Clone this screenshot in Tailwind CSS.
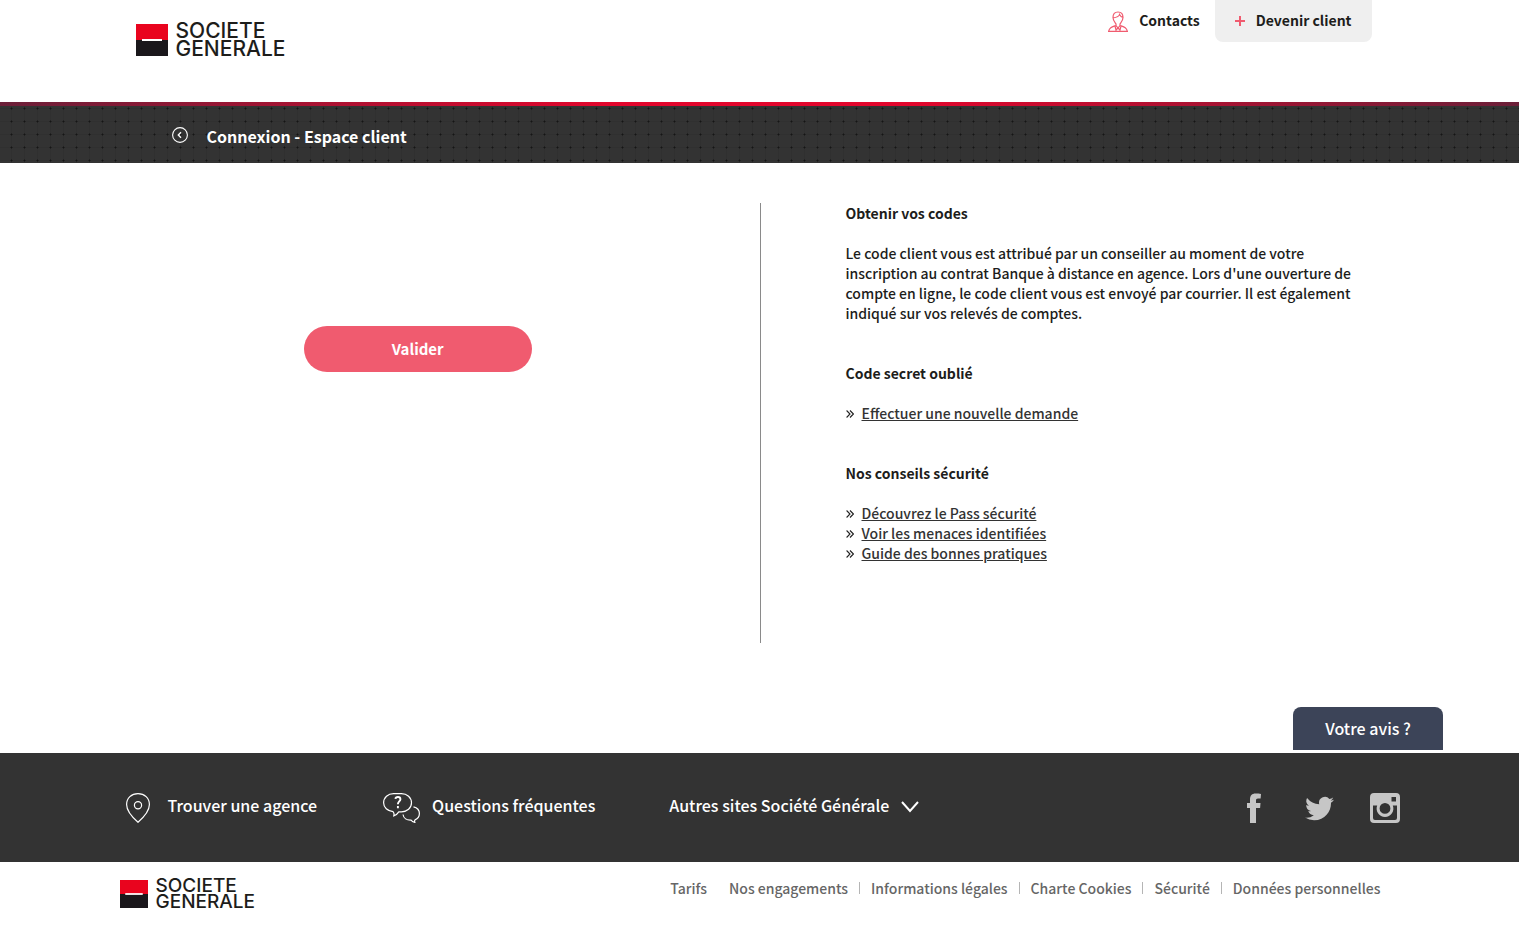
<!DOCTYPE html>
<html lang="fr">
<head>
<meta charset="utf-8">
<meta name="viewport" content="width=device-width, initial-scale=1">
<title>Connexion - Espace client</title>
<script src="https://cdn.jsdelivr.net/npm/@tailwindcss/browser@4"></script>
</head>
<body class="bg-white font-['Noto_Sans_CJK_SC','Noto_Sans',sans-serif] text-sm leading-5 font-medium text-[#1d1d1b]">
<header class="h-[102px]">
  <div class="mx-auto flex max-w-[1248px] items-start justify-between pr-3">
    <a href="#" aria-label="Société Générale" class="mt-[22px] flex items-center gap-2 font-[Inter,sans-serif] text-[21px] leading-[18px] font-medium">
      <svg class="size-8" viewBox="0 0 32 32"><path fill="#e9041e" d="M0 0h32v16H0z"/><path fill="#1a171b" d="M0 16h32v16H0z"/><path fill="#fff" d="M6 15h20v2H6z"/></svg>
      <span>SOCIETE<br>GENERALE</span>
    </a>
    <nav class="flex items-start gap-[15px] font-bold">
      <a href="#" class="flex h-[42px] items-center gap-[11px] pb-0.5">
        <svg class="mt-0.5 h-[21px] w-5" viewBox="0 0 20 21" fill="none" stroke="#f05b6f" stroke-width="1.2"><path d="M10 1C6.500 1 5 3.500 5 6.500c0 3 2 5 3 6.500v1.500L10 17l2-2.500V13c1-1.500 3-3.500 3-6.500C15 3.500 13.500 1 10 1zM5 7c3-.5 6-1 6.500-3.500C12.500 5.500 13.500 6 15 6.500M8 14.500c-4 1.500-6.500 2-7.400 5.900h18.800c-.9-3.900-3.400-4.400-7.400-5.900M7 15l1 4 2-2 2 2 1-4"/></svg>
        Contacts
      </a>
      <a href="#" class="flex h-[42px] items-center gap-[11px] rounded-b-lg bg-[#efefef] px-5 pb-0.5">
        <svg class="mt-0.5 size-2.5" viewBox="0 0 10 10" stroke="#f05b6f" stroke-width="2"><path d="M5 0v10M0 5h10"/></svg>
        Devenir client
      </a>
    </nav>
  </div>
</header>
<div class="h-1 bg-[linear-gradient(to_right,#6b1f38,#e2062c_40%,#e2062c_60%,#6b1f38)]"></div>
<div class="relative h-[57px] bg-[#333]">
  <svg class="absolute inset-0 size-full" aria-hidden="true"><defs><pattern id="grid" width="13" height="13" patternUnits="userSpaceOnUse"><path fill="#303030" d="M11 0h1v13h-1zM0 2h13v1H0z"/><path fill="#232323" d="M10 2h3v1h-3zM11 1h1v3h-1z"/><path fill="#151515" d="M11 2h1v1h-1z"/></pattern></defs><rect width="100%" height="100%" fill="url(#grid)"/></svg>
  <div class="relative mx-auto flex h-full max-w-[1248px] items-center gap-[19px] px-9 pt-0.5">
    <a href="#" aria-label="Retour"><svg class="mb-0.5 size-4" viewBox="0 0 16 16" fill="none" stroke="#fff"><circle cx="8" cy="8" r="7.400" stroke-width="1.100"/><path stroke-width="1.400" d="M9 5.200 6.300 8 9 10.800"/></svg></a>
    <h1 class="text-base leading-5 font-bold text-white">Connexion - Espace client</h1>
  </div>
</div>
<main class="relative mx-auto flex h-[590px] w-[90%] pt-10">
  <form class="flex w-1/2 justify-center pt-[123px]">
    <button type="submit" class="h-[46px] w-[228px] rounded-full bg-[#f05b6f] text-[15px] font-bold text-white">Valider</button>
  </form>
  <div class="h-[440px] w-1/2 border-l border-[#8a8a8a] pr-[83px] pl-[85px]">
    <h2 class="font-bold">Obtenir vos codes</h2>
    <p class="mt-5">Le code client vous est attribué par un conseiller au moment de votre inscription au contrat Banque à distance en agence. Lors d'une ouverture de compte en ligne, le code client vous est envoyé par courrier. Il est également indiqué sur vos relevés de comptes.</p>
    <h2 class="mt-10 font-bold">Code secret oublié</h2>
    <ul class="mt-5 text-[#333]">
      <li class="flex items-center gap-2"><svg class="mt-0.5 size-2" viewBox="0 0 8 8" fill="none" stroke="#222" stroke-width="1.100"><path d="M.6.500 4 4 .6 7.500M4 .5 7.400 4 4 7.500"/></svg><a href="#" class="underline">Effectuer une nouvelle demande</a></li>
    </ul>
    <h2 class="mt-10 font-bold">Nos conseils sécurité</h2>
    <ul class="mt-5 text-[#333]">
      <li class="flex items-center gap-2"><svg class="mt-0.5 size-2" viewBox="0 0 8 8" fill="none" stroke="#222" stroke-width="1.100"><path d="M.6.500 4 4 .6 7.500M4 .5 7.400 4 4 7.500"/></svg><a href="#" class="underline">Découvrez le Pass sécurité</a></li>
      <li class="flex items-center gap-2"><svg class="mt-0.5 size-2" viewBox="0 0 8 8" fill="none" stroke="#222" stroke-width="1.100"><path d="M.6.500 4 4 .6 7.500M4 .5 7.400 4 4 7.500"/></svg><a href="#" class="underline">Voir les menaces identifiées</a></li>
      <li class="flex items-center gap-2"><svg class="mt-0.5 size-2" viewBox="0 0 8 8" fill="none" stroke="#222" stroke-width="1.100"><path d="M.6.500 4 4 .6 7.500M4 .5 7.400 4 4 7.500"/></svg><a href="#" class="underline">Guide des bonnes pratiques</a></li>
    </ul>
  </div>
  <button type="button" class="absolute right-0 bottom-[3px] h-[43px] w-[150px] rounded-t-lg bg-[#3c4458] pb-0.5 text-base font-medium text-white">Votre avis ?</button>
</main>
<footer>
  <div class="bg-[#333] text-base text-white">
    <div class="mx-auto flex h-[109px] max-w-[1280px] items-center">
      <a href="#" class="flex items-center gap-[18px] pl-1.5"><svg class="h-[30px] w-6" viewBox="0 0 24 30" fill="none" stroke="#fff" stroke-width="1.200"><path d="M12 .6C5.500.6.600 5.200.600 11.500.600 18 6 24 12 29.300 18 24 23.400 18 23.400 11.500 23.400 5.200 18.500.6 12 .6z"/><circle cx="12" cy="12.300" r="3.600"/></svg><span class="pb-1.5">Trouver une agence</span></a>
      <a href="#" class="ml-[66px] flex items-center gap-3"><svg class="h-[30px] w-[37px]" viewBox="0 0 37 30" fill="none" stroke="#fff" stroke-width="1.200"><path d="M10 18.700C4.500 18 .6 14.500.6 9.800.6 4.500 5 .6 10.500.6h8c5.500 0 10 4 10 9.200s-4.500 9-10 9h-2.700c-1.300 2-3 3.500-5 4 .5-1.500.3-2.800-.8-4.100zM30.500 13.800c3.500.8 5.900 3.400 5.900 6.800 0 3-1.700 5.200-4.400 6.300-.8.600-.5 1.500-.2 2.400-1.500-.3-3-1-3.800-2.300-4.200.3-7.500-2-8-5.500"/><path stroke-width="1.900" d="M12.400 5.800c.3-2.300 5-2.600 5 .4 0 2.200-2.500 2.300-2.500 5M14.900 13v2.300"/></svg><span class="pb-1.5">Questions fréquentes</span></a>
      <button type="button" class="ml-[74px] flex items-center gap-3 pb-1.5">Autres sites Société Générale<svg class="mt-1 h-3 w-[18px]" viewBox="0 0 18 12" fill="none" stroke="#fff" stroke-width="2"><path d="m1 1 8 9 8-9"/></svg></button>
      <div class="ml-auto flex items-center gap-9">
        <a href="#" aria-label="Facebook"><svg class="h-[30px] w-[22px]" viewBox="4 0 22 30" fill="#c6c6c6"><path d="M7 30V15H4v-5h3V6.500C7 2.500 9 .5 12.500.5c2 0 4 .1 5.500.5l-.4 4.500H15c-1.500 0-2 .8-2 2V10h4.500l-.4 5H13v15z"/></svg></a>
        <a href="#" aria-label="Twitter"><svg class="h-[30px] w-[29px]" viewBox="0 -1 24 25" preserveAspectRatio="none" fill="#c6c6c6"><path d="M24 4.600c-.9.400-1.800.7-2.800.8a4.900 4.900 0 0 0 2.100-2.700c-1 .6-2 1-3.100 1.200a4.900 4.900 0 0 0-8.400 4.500A14 14 0 0 1 1.700 3.200a4.900 4.900 0 0 0 1.500 6.500A4.900 4.900 0 0 1 1 9.100v.1a4.900 4.900 0 0 0 3.900 4.800 5 5 0 0 1-2.200.1 4.900 4.900 0 0 0 4.600 3.400A9.900 9.900 0 0 1 0 19.500a13.900 13.900 0 0 0 7.500 2.200c9.100 0 14-7.500 14-14v-.6A10 10 0 0 0 24 4.600z"/></svg></a>
        <a href="#" aria-label="Instagram"><svg class="size-[30px]" viewBox="0 0 30 30" fill="#c6c6c6"><path fill-rule="evenodd" d="M4 0h22a4 4 0 0 1 4 4v22a4 4 0 0 1-4 4H4a4 4 0 0 1-4-4V4a4 4 0 0 1 4-4zM21.500 4v4.500H26V4zM3 12.500V25a2 2 0 0 0 2 2h20a2 2 0 0 0 2-2V12.500h-4.200A8.400 8.400 0 1 1 7.200 12.500zM15 10a5.400 5.400 0 1 0 0 10.800A5.400 5.400 0 1 0 15 10z"/></svg></a>
      </div>
    </div>
  </div>
  <div class="mx-auto flex max-w-[1280px] items-start justify-between pt-4 pr-2">
    <a href="#" aria-label="Société Générale" class="flex items-center gap-2 font-[Inter,sans-serif] text-[19px] leading-4 font-medium">
      <svg class="size-7" viewBox="0 0 32 32"><path fill="#e9041e" d="M0 0h32v16H0z"/><path fill="#1a171b" d="M0 16h32v16H0z"/><path fill="#fff" d="M6 15h20v2H6z"/></svg>
      <span>SOCIETE<br>GENERALE</span>
    </a>
    <nav class="flex items-center text-[#666]">
      <a href="#" class="px-[11px]">Tarifs</a>
      <a href="#" class="px-[11px]">Nos engagements</a><i class="h-3 w-px bg-[#b5b5b5]"></i>
      <a href="#" class="px-[11px]">Informations légales</a><i class="h-3 w-px bg-[#b5b5b5]"></i>
      <a href="#" class="px-[11px]">Charte Cookies</a><i class="h-3 w-px bg-[#b5b5b5]"></i>
      <a href="#" class="px-[11px]">Sécurité</a><i class="h-3 w-px bg-[#b5b5b5]"></i>
      <a href="#" class="px-[11px]">Données personnelles</a>
    </nav>
  </div>
</footer>
</body>
</html>
